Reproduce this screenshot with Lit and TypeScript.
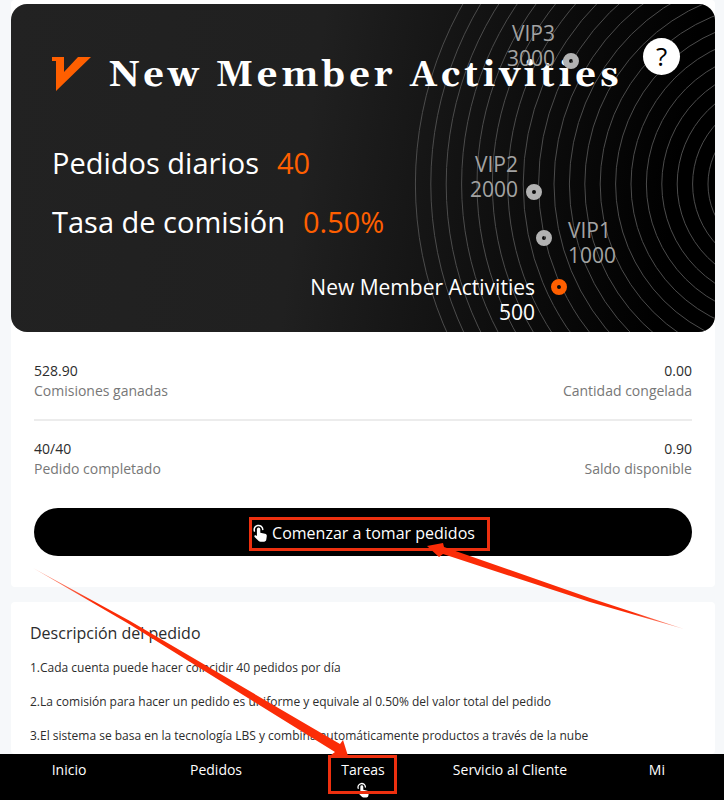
import { LitElement, html, css, svg } from "lit";
import { customElement } from "lit/decorators.js";
import { classMap } from "lit/directives/class-map.js";

const handIcon = html`
  <svg class="hand" viewBox="0 0 14 18" aria-hidden="true">
    <path
      d="M1.4 7A4.3 4.3 0 1 1 9.8 5.6"
      fill="none"
      stroke="currentColor"
      stroke-width="1.5"
      stroke-linecap="round"
    />
    <path
      d="M3.9 5.2a1.7 1.7 0 0 1 3.4 0v3.6l4.700 1c1.2.3 1.9 1 1.8 2.3l-.5 3.4c-.2 1.4-1 2.2-2.3 2.2H7.6c-.8 0-1.4-.3-1.9-.8L1.6 12.900c-.4-.4-.3-.9 0-1.3.4-.4 1-.5 1.5-.2l.8.5z"
      fill="currentColor"
    />
  </svg>
`;

const levels = [
  { id: "vip3", name: "VIP3", amount: "3000" },
  { id: "vip2", name: "VIP2", amount: "2000" },
  { id: "vip1", name: "VIP1", amount: "1000" },
  { id: "start", name: "New Member Activities", amount: "500" },
];

const stats = [
  [
    { value: "528.90", label: "Comisiones ganadas" },
    { value: "0.00", label: "Cantidad congelada" },
  ],
  [
    { value: "40/40", label: "Pedido completado" },
    { value: "0.90", label: "Saldo disponible" },
  ],
];

const notes = [
  "1.Cada cuenta puede hacer coincidir 40 pedidos por día",
  "2.La comisión para hacer un pedido es uniforme y equivale al 0.50% del valor total del pedido",
  "3.El sistema se basa en la tecnología LBS y combina automáticamente productos a través de la nube",
];

const tabs = ["Inicio", "Pedidos", "Tareas", "Servicio al Cliente", "Mi"];

@customElement("member-hero")
export class MemberHero extends LitElement {
  static styles = css`
    :host {
      display: block;
    }
    .hero {
      position: relative;
      overflow: hidden;
      border-radius: 16px;
      padding: 46px 41px 89px;
      color: #fff;
      background: linear-gradient(98deg, #222 0%, #202020 42%, #0d0d0d 72%, #000 92%);
    }
    .rings {
      position: absolute;
      inset: 0;
      width: 100%;
      height: 100%;
      fill: none;
      stroke: #4c4c4c;
    }
    .brand {
      position: relative;
      display: flex;
      align-items: center;
      gap: 18px;
      height: 48px;
      margin-bottom: 44px;
    }
    .logo {
      flex: none;
      width: 39px;
      height: 34px;
      fill: #ff5f00;
    }
    .title {
      margin: 0;
      padding-top: 4px;
      font: bold 36px/48px Gelasio, Georgia, "Liberation Serif", serif;
      letter-spacing: 4px;
      white-space: nowrap;
    }
    .facts {
      position: relative;
      display: grid;
      gap: 17px;
      margin: 0;
      font-size: 29px;
      line-height: 42px;
    }
    .fact {
      display: flex;
      gap: 18px;
    }
    .fact dd {
      margin: 0;
      color: #ff5f00;
    }
    .level {
      position: absolute;
      display: flex;
      align-items: flex-end;
      gap: 8px;
      font-size: 21px;
      line-height: 25px;
      text-align: right;
      color: #a3a3a3;
      white-space: nowrap;
    }
    .level span {
      display: block;
    }
    .dot {
      box-sizing: border-box;
      width: 16px;
      height: 16px;
      margin: 2px 0;
      border: 6px solid #b2b2b2;
      border-radius: 50%;
    }
    .vip3 {
      top: 17px;
      right: 136px;
    }
    .vip2 {
      top: 148px;
      right: 173px;
    }
    .vip1 {
      top: 214px;
      right: 99px;
      flex-direction: row-reverse;
      align-items: flex-start;
      gap: 16px;
      text-align: left;
    }
    .vip1 .dot {
      margin-top: 12px;
    }
    .start {
      top: 271px;
      right: 148px;
      align-items: flex-start;
      gap: 16px;
      color: #fff;
    }
    .start .dot {
      margin-top: 4px;
      border-color: #ff5f00;
    }
    .help {
      position: absolute;
      top: 34px;
      right: 35px;
      width: 37px;
      height: 37px;
      padding: 0;
      border: 0;
      border-radius: 50%;
      background: #fff;
      color: #000;
      font: 500 26px/37px "Open Sans", sans-serif;
    }
  `;

  render() {
    const radii = Array.from({ length: 20 }, (_, i) => 73 + i * 15.4);
    return html`
      <section class="hero">
        <svg class="rings" viewBox="0 0 704 328" preserveAspectRatio="xMaxYMin slice" aria-hidden="true">
          ${radii.map((r) => svg`<circle cx="770" cy="180" r=${r} />`)}
        </svg>
        <div class="brand">
          <svg class="logo" viewBox="0 0 39 34" aria-hidden="true">
            <path d="M0 0H12V15L26 0H39L4 34V4H0z" />
          </svg>
          <h1 class="title">New Member Activities</h1>
        </div>
        <dl class="facts">
          <div class="fact"><dt>Pedidos diarios</dt><dd>40</dd></div>
          <div class="fact"><dt>Tasa de comisión</dt><dd>0.50%</dd></div>
        </dl>
        ${levels.map(
          (l) => html`
            <div class=${classMap({ level: true, [l.id]: true })}>
              <div><span>${l.name}</span><span>${l.amount}</span></div>
              <i class="dot"></i>
            </div>
          `,
        )}
        <button class="help" type="button">?</button>
      </section>
    `;
  }
}

@customElement("app-root")
export class AppRoot extends LitElement {
  static styles = css`
    :host {
      position: relative;
      display: flex;
      flex-direction: column;
      min-height: 100vh;
      overflow: hidden;
      background: #f6f8fa;
      color: #2c2c2c;
      font-family: "Open Sans", "Noto Sans", sans-serif;
    }
    .page {
      flex: 1;
      display: flex;
      flex-direction: column;
      gap: 15px;
      padding: 0 9px 0 11px;
    }
    .panel {
      background: #fff;
      border-radius: 4px;
    }
    .summary {
      padding: 4px 0 31px;
    }
    .body {
      padding: 29px 23px 0;
    }
    .row {
      display: flex;
      justify-content: space-between;
      font-size: 14px;
      line-height: 20px;
    }
    .row + .row {
      margin-top: 18px;
      padding-top: 18px;
      border-top: 2px solid #ececec;
    }
    .stat {
      display: flex;
      flex-direction: column;
    }
    .stat:last-child {
      text-align: right;
    }
    .label {
      color: #777;
    }
    .go {
      display: flex;
      justify-content: center;
      align-items: center;
      width: 100%;
      height: 48px;
      margin-top: 29px;
      padding: 2px 0 0 2px;
      border: 0;
      border-radius: 24px;
      background: #000;
      color: #fff;
      font: 16px/24px "Open Sans", "Noto Sans", sans-serif;
    }
    .go-text {
      position: relative;
      display: flex;
      align-items: center;
      gap: 5px;
    }
    .hand {
      display: block;
      width: 14px;
      height: 18px;
    }
    .go-text::after,
    .current::after {
      content: "";
      position: absolute;
      border: 3px solid #ee300f;
    }
    .go-text::after {
      inset: -4px -15px -6px -4px;
    }
    .notes {
      flex: 1;
      padding: 20px 19px 0;
    }
    .notes-title {
      margin: 0 0 7px;
      font-size: 16px;
      font-weight: 400;
      line-height: 22px;
    }
    .list {
      margin: 0;
      padding: 0;
      list-style: none;
      font-size: 12px;
      line-height: 34px;
    }
    .tabs {
      display: grid;
      grid-template-columns: repeat(5, 20.3%);
      justify-content: center;
      height: 46px;
      background: #000;
    }
    .tab {
      display: flex;
      flex-direction: column;
      align-items: center;
      gap: 2px;
      padding-top: 6px;
      padding-left: 2px;
      color: #fff;
      font-size: 14px;
      line-height: 20px;
      text-decoration: none;
      white-space: nowrap;
    }
    .tab .hand {
      width: 12px;
      height: 16px;
    }
    .current {
      position: relative;
    }
    .current::after {
      inset: 1px 38px 6px 39px;
    }
    .arrows {
      position: absolute;
      inset: 0;
      width: 100%;
      height: 100%;
      pointer-events: none;
    }
  `;

  render() {
    return html`
      <main class="page">
        <section class="panel summary">
          <member-hero></member-hero>
          <div class="body">
            ${stats.map(
              (row) => html`
                <div class="row">
                  ${row.map(
                    (s) => html`
                      <div class="stat"><span>${s.value}</span><span class="label">${s.label}</span></div>
                    `,
                  )}
                </div>
              `,
            )}
            <button class="go" type="button">
              <span class="go-text">${handIcon}<span>Comenzar a tomar pedidos</span></span>
            </button>
          </div>
        </section>
        <section class="panel notes">
          <h2 class="notes-title">Descripción del pedido</h2>
          <ul class="list">
            ${notes.map((n) => html`<li>${n}</li>`)}
          </ul>
        </section>
      </main>
      <nav class="tabs">
        ${tabs.map((t) => {
          const current = t === "Tareas";
          return html`
            <a class=${classMap({ tab: true, current })} href="#">
              <span>${t}</span>${current ? handIcon : ""}
            </a>
          `;
        })}
      </nav>
      <svg class="arrows" viewBox="0 0 724 800" preserveAspectRatio="none" aria-hidden="true">
        <defs>
          <linearGradient id="fade-right" x1="0" x2="1">
            <stop offset="0" stop-color="#fb2c07" stop-opacity="0.4" />
            <stop offset="0.2" stop-color="#fb2c07" />
          </linearGradient>
          <linearGradient id="fade-left" x1="1" x2="0">
            <stop offset="0" stop-color="#fb2c07" stop-opacity="0.4" />
            <stop offset="0.2" stop-color="#fb2c07" />
          </linearGradient>
        </defs>
        <path fill="url(#fade-right)" d="M33 568L130 621L340 744L343 740L348 756L331 755L335 752L129 624z" />
        <path fill="url(#fade-left)" d="M684 629L590 602L443 554L439 557L427 546L443 543L444 547L590 598z" />
      </svg>
    `;
  }
}
